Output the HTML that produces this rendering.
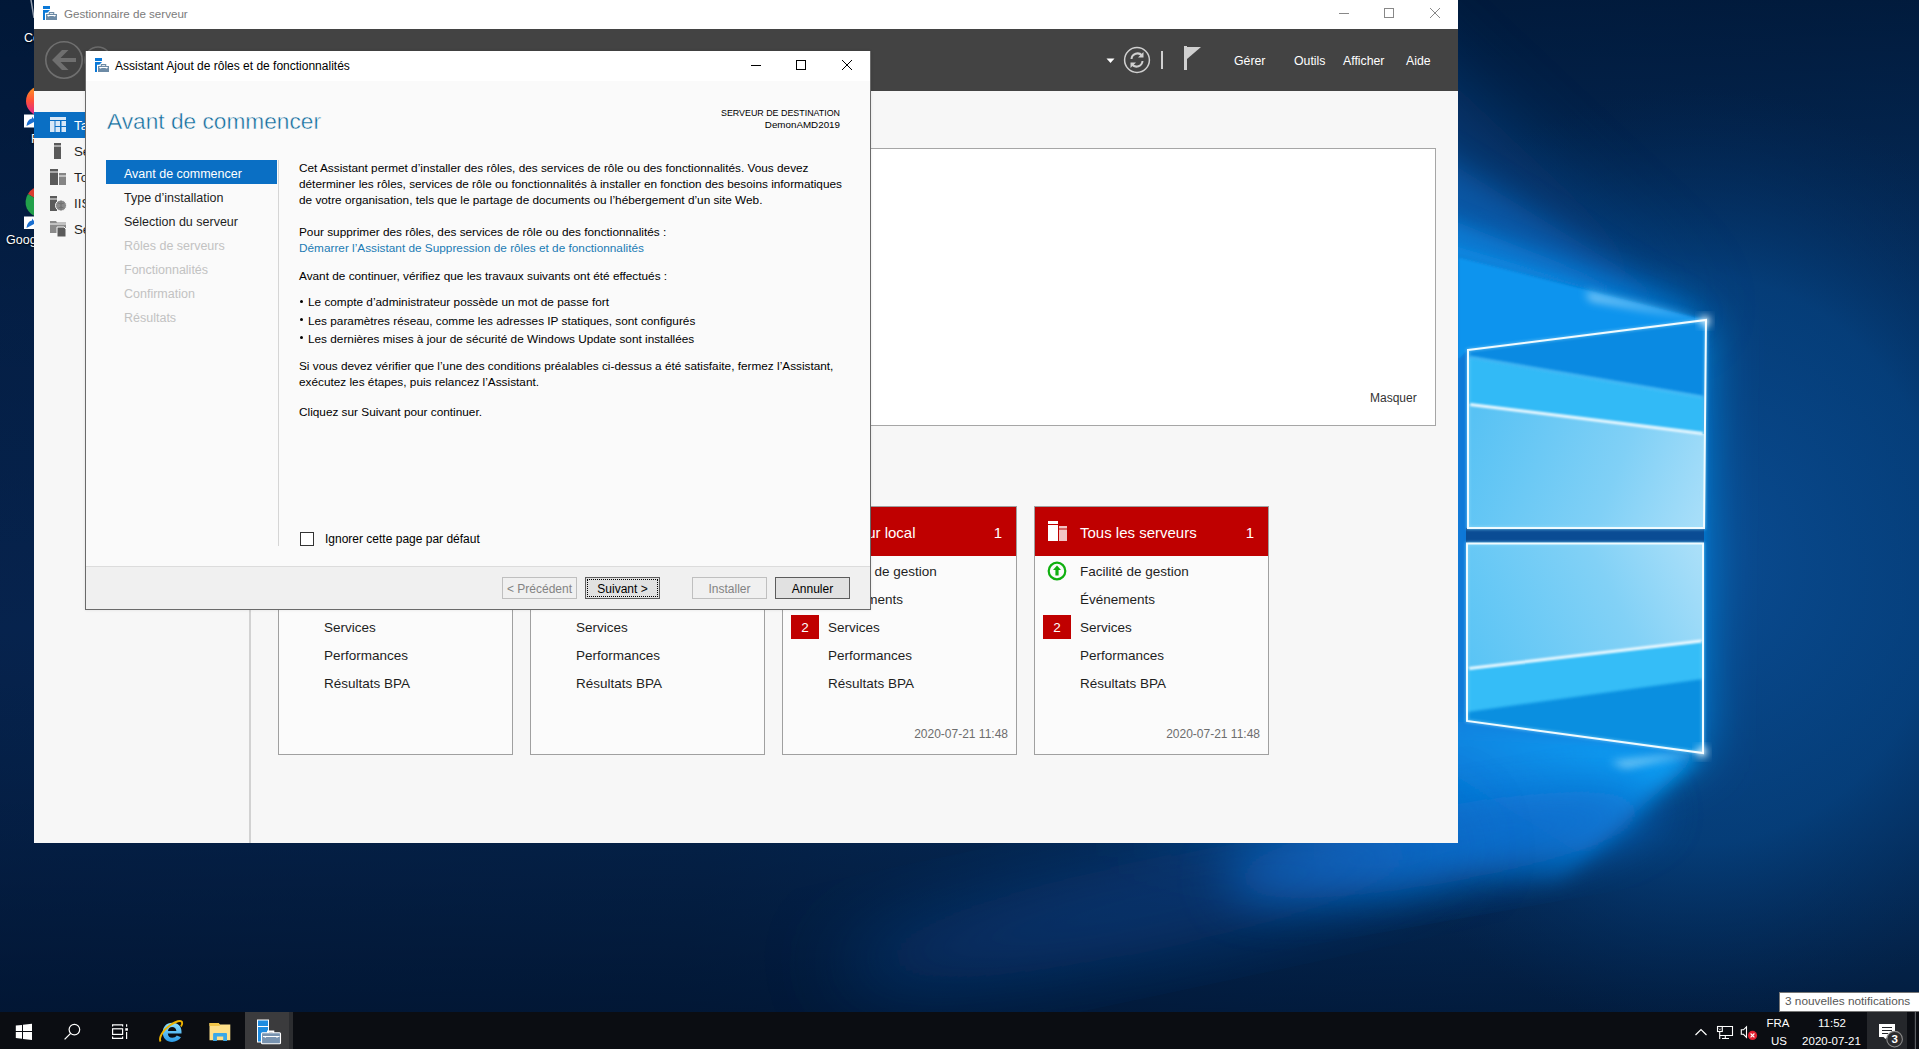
<!DOCTYPE html>
<html><head><meta charset="utf-8">
<style>
*{margin:0;padding:0;box-sizing:border-box}
html,body{width:1919px;height:1049px;overflow:hidden}
body{position:relative;font-family:"Liberation Sans",sans-serif;background:#00112b}
.t{position:absolute;white-space:nowrap;line-height:20px}
.r{position:absolute}
svg{position:absolute;overflow:visible}
</style></head><body>
<svg width="1919" height="1049" viewBox="0 0 1919 1049" style="left:0;top:0">
<defs>
<linearGradient id="bgb" x1="0" y1="100" x2="1919" y2="700" gradientUnits="userSpaceOnUse">
<stop offset="0" stop-color="#06224c"/>
<stop offset="0.45" stop-color="#062752"/>
<stop offset="0.72" stop-color="#06336a"/>
<stop offset="1" stop-color="#083a72"/>
</linearGradient>
<linearGradient id="topdark" x1="0" y1="0" x2="0" y2="1049" gradientUnits="userSpaceOnUse">
<stop offset="0" stop-color="#001634" stop-opacity="0.85"/>
<stop offset="0.3" stop-color="#001634" stop-opacity="0.3"/>
<stop offset="0.6" stop-color="#001634" stop-opacity="0"/>
<stop offset="0.8" stop-color="#00112a" stop-opacity="0.3"/>
<stop offset="1" stop-color="#00112a" stop-opacity="0.8"/>
</linearGradient>
<radialGradient id="rside" cx="1700" cy="560" r="430" gradientUnits="userSpaceOnUse" gradientTransform="translate(1700 560) scale(0.95 1.1) translate(-1700 -560)">
<stop offset="0" stop-color="#0a4c92" stop-opacity="1"/>
<stop offset="0.6" stop-color="#05417f" stop-opacity="0.8"/>
<stop offset="1" stop-color="#022a5a" stop-opacity="0"/>
</radialGradient>
<linearGradient id="floor" x1="1700" y1="0" x2="1100" y2="0" gradientUnits="userSpaceOnUse">
<stop offset="0" stop-color="#0a8ee8"/>
<stop offset="0.45" stop-color="#0a7ad6"/>
<stop offset="1" stop-color="#0a50a0" stop-opacity="0"/>
</linearGradient>
<linearGradient id="glowT" x1="1590" y1="291" x2="1570" y2="230" gradientUnits="userSpaceOnUse">
<stop offset="0" stop-color="#0a8ee8" stop-opacity="1"/>
<stop offset="0.5" stop-color="#0a70cc" stop-opacity="0.6"/>
<stop offset="1" stop-color="#0a4c90" stop-opacity="0"/>
</linearGradient>
<linearGradient id="glowB2" x1="1600" y1="740" x2="1500" y2="900" gradientUnits="userSpaceOnUse">
<stop offset="0" stop-color="#0a9cf2" stop-opacity="1"/>
<stop offset="0.5" stop-color="#0a84e0" stop-opacity="0.75"/>
<stop offset="1" stop-color="#0a6ac8" stop-opacity="0"/>
</linearGradient>
<linearGradient id="p1low" x1="1468" y1="430" x2="1705" y2="527" gradientUnits="userSpaceOnUse">
<stop offset="0" stop-color="#58c2f4"/>
<stop offset="0.6" stop-color="#80d0f6"/>
<stop offset="1" stop-color="#aadff9"/>
</linearGradient>
<linearGradient id="p2up" x1="1468" y1="660" x2="1705" y2="543" gradientUnits="userSpaceOnUse">
<stop offset="0" stop-color="#5ac4f5"/>
<stop offset="0.6" stop-color="#82d1f6"/>
<stop offset="1" stop-color="#ade0f9"/>
</linearGradient>
<filter id="b40" x="-50%" y="-50%" width="200%" height="200%"><feGaussianBlur stdDeviation="40"/></filter>
<filter id="b25" x="-50%" y="-50%" width="200%" height="200%"><feGaussianBlur stdDeviation="25"/></filter>
<filter id="b15" x="-50%" y="-50%" width="200%" height="200%"><feGaussianBlur stdDeviation="15"/></filter>
<filter id="b10" x="-50%" y="-50%" width="200%" height="200%"><feGaussianBlur stdDeviation="10"/></filter>
<filter id="b4" x="-50%" y="-50%" width="200%" height="200%"><feGaussianBlur stdDeviation="4"/></filter>
<filter id="b2" x="-50%" y="-50%" width="200%" height="200%"><feGaussianBlur stdDeviation="1.5"/></filter>
<filter id="b1" x="-50%" y="-50%" width="200%" height="200%"><feGaussianBlur stdDeviation="0.8"/></filter>
</defs>
<rect width="1919" height="1049" fill="url(#bgb)"/>
<rect width="1919" height="1049" fill="url(#topdark)"/>
<rect width="1919" height="1049" fill="url(#rside)"/>
<!-- floor / beams -->
<polygon points="1705,320 1458,258 1000,150 1000,850 1400,870 1702,753" fill="url(#floor)" filter="url(#b25)"/>
<polygon points="1705,322 1458,262 1458,740 1702,751" fill="#0a78d8" filter="url(#b4)"/>
<polygon points="1705,320 1300,218 1300,-60" fill="#0a5cb0" opacity="0.4" filter="url(#b40)"/>
<polygon points="1705,320 1300,218 1300,70" fill="#0a70cc" opacity="0.55" filter="url(#b15)"/>
<polygon points="1705,320 1300,218 1300,160" fill="#0a86e2" opacity="0.75" filter="url(#b10)"/>
<polygon points="1705,320 1300,218 1300,200" fill="#0a90ea" opacity="0.8" filter="url(#b4)"/>
<polygon points="1705,320 1458,257 1458,360 1468,350" fill="#0a94ee" filter="url(#b2)"/>
<polygon points="1706,320 1585,291 1590,301" fill="#d8f4ff" opacity="0.55" filter="url(#b4)"/>
<polygon points="1702,753 1467,721 1300,740 1300,900 1560,880" fill="url(#glowB2)" filter="url(#b10)"/>
<polygon points="1702,752 1610,762 1625,768" fill="#bfeeff" opacity="0.7" filter="url(#b4)"/>
<!-- bottom beam glow -->
<ellipse cx="1440" cy="845" rx="220" ry="38" transform="rotate(-10 1440 845)" fill="#0a70d0" filter="url(#b25)" opacity="0.95"/>
<ellipse cx="1150" cy="905" rx="320" ry="45" transform="rotate(-12 1150 905)" fill="#0a4a96" filter="url(#b40)" opacity="0.5"/>
<!-- gap between panes -->
<polygon points="1466,528 1704,528 1704,543 1466,543" fill="#0a4c94"/>
<!-- pane 1 -->
<polygon points="1468,350 1706,320 1704,528 1468,528" fill="#0a8ae2"/>
<polygon points="1468,357 1704,397 1704,528 1468,528" fill="#30baf6" filter="url(#b2)"/>
<polygon points="1468,404 1704,434 1704,528 1468,528" fill="url(#p1low)"/>
<line x1="1470" y1="357" x2="1703" y2="397" stroke="#6fd2ff" stroke-width="2" filter="url(#b2)" opacity="0.7"/>
<line x1="1470" y1="404.5" x2="1703" y2="433.5" stroke="#effaff" stroke-width="3" filter="url(#b1)"/>
<polygon points="1468,350 1706,320 1704,528 1468,528" fill="none" stroke="#9fe6ff" stroke-width="3" filter="url(#b2)" opacity="0.5"/>
<polygon points="1468,350 1706,320 1704,528 1468,528" fill="none" stroke="#f0fbff" stroke-width="2"/>
<!-- pane 2 -->
<polygon points="1467,543.5 1703,543.5 1703,753 1467,721" fill="#0a8fe0"/>
<polygon points="1467,543.5 1703,543.5 1703,679 1467,712" fill="#36bdf7" filter="url(#b2)"/>
<polygon points="1467,543.5 1703,543.5 1703,641 1467,668.5" fill="url(#p2up)"/>
<line x1="1469" y1="668.5" x2="1702" y2="641" stroke="#effaff" stroke-width="3" filter="url(#b1)"/>
<polygon points="1467,543.5 1703,543.5 1703,753 1467,721" fill="none" stroke="#9fe6ff" stroke-width="3" filter="url(#b2)" opacity="0.5"/>
<polygon points="1467,543.5 1703,543.5 1703,753 1467,721" fill="none" stroke="#f0fbff" stroke-width="2"/>
<!-- corner sparkles -->
<circle cx="1705" cy="321" r="5" fill="#fff" filter="url(#b4)"/>
<circle cx="1702" cy="752" r="5" fill="#fff" filter="url(#b4)"/>
</svg>

<svg width="34" height="260" style="left:0;top:0">
<defs>
<linearGradient id="ff" x1="0" y1="0" x2="0" y2="1"><stop offset="0" stop-color="#ff9a1f"/><stop offset="0.5" stop-color="#ff4f3a"/><stop offset="1" stop-color="#d9249a"/></linearGradient>
</defs>
<path d="M31 0 L34 18" stroke="#b8c0cc" stroke-width="1.5" opacity="0.8"/>
<circle cx="41" cy="101" r="15" fill="url(#ff)"/>
<rect x="24" y="114.5" width="10" height="13" fill="#fff"/>
<path d="M26.5 126 Q27 119.5 32 118.5 V116.5 L34 119 V122" fill="#1a6fd0"/>
<path d="M41 202 L28 194 A15 15 0 0 1 54 194 Z" fill="#db3b2f"/>
<path d="M41 202 L28 194 A15 15 0 0 0 38 217 Z" fill="#22a04a"/>
<rect x="24" y="216.5" width="10" height="12.5" fill="#fff"/>
<path d="M26.5 228 Q27 221.5 32 220.5 V218.5 L34 221 V224" fill="#1a6fd0"/>
</svg>

<div class="t" style="left:24px;top:27.67px;font-size:12.5px;color:#fff;text-shadow:0 1px 2px #000">Corbeille</div>
<div class="t" style="left:31px;top:128.67px;font-size:12.5px;color:#fff;text-shadow:0 1px 2px #000">Firefox</div>
<div class="t" style="left:6px;top:229.67px;font-size:12.5px;color:#fff;text-shadow:0 1px 2px #000">Google Chrome</div>
<div class="r" style="left:34px;top:0px;width:1424px;height:29px;background:#fff"></div>
<div class="r" style="left:34px;top:29px;width:1424px;height:62px;background:#434343"></div>
<div class="r" style="left:34px;top:91px;width:1424px;height:752px;background:#f7f7f7"></div>
<div class="t" style="left:64px;top:3.98px;font-size:11.6px;color:#7b7b7b;">Gestionnaire de serveur</div>
<div class="t" style="left:1234px;top:50.74px;font-size:12.3px;color:#fff;">Gérer</div>
<div class="t" style="left:1294px;top:50.74px;font-size:12.3px;color:#fff;">Outils</div>
<div class="t" style="left:1343px;top:50.74px;font-size:12.3px;color:#fff;">Afficher</div>
<div class="t" style="left:1406px;top:50.74px;font-size:12.3px;color:#fff;">Aide</div>
<div class="r" style="left:34px;top:112px;width:216px;height:26px;background:#0a6fc4"></div>
<div class="r" style="left:249px;top:91px;width:2px;height:752px;background:#d2d2d2"></div>
<svg width="16" height="16" viewBox="0 0 16 16" style="left:42px;top:5px">
<rect x="1" y="1" width="7" height="3" fill="#0a78d7"/>
<path d="M1 5 H8 L5.3 7.7 H3 V15 H1 Z" fill="#0a78d7"/>
<path d="M7.3 9.2 V7.6 H11.7 V9.2" stroke="#6d8ba6" stroke-width="1.1" fill="none"/>
<rect x="4" y="9" width="11" height="6" fill="#6d8ba6"/>
<path d="M5 10 H14 L13 11.6 H12 L11.5 10.9 H7.5 L7 11.6 H6 Z" fill="#fff"/>
</svg>
<svg width="1424" height="29" style="left:34px;top:0">
<line x1="1305" y1="13.5" x2="1315" y2="13.5" stroke="#888" stroke-width="1"/>
<rect x="1350.5" y="8.5" width="9" height="9" fill="none" stroke="#888" stroke-width="1"/>
<path d="M1396 8 L1406 18 M1406 8 L1396 18" stroke="#888" stroke-width="1"/>
</svg>
<svg width="1424" height="62" style="left:34px;top:29px">
<circle cx="30" cy="31" r="18.2" fill="none" stroke="#6f6f6f" stroke-width="1.6"/>
<path d="M18 31 L28 21 L34.5 21 L26.5 29 L42 29 L42 33 L26.5 33 L34.5 41 L28 41 Z" fill="#6f6f6f"/>
<circle cx="64" cy="31" r="13" fill="none" stroke="#6a6a6a" stroke-width="1.4"/>
<path d="M1072.5 29.5 H1080.5 L1076.5 34 Z" fill="#fff"/>
<circle cx="1103" cy="31" r="12.4" fill="none" stroke="#d0d0d0" stroke-width="1.5"/>
<path d="M1097.5 30 A6 6 0 0 1 1108 26.5" stroke="#d0d0d0" stroke-width="2" fill="none"/>
<path d="M1109.5 23 L1109.5 28.5 L1104 28.5 Z" fill="#d0d0d0"/>
<path d="M1108.5 32 A6 6 0 0 1 1098 35.5" stroke="#d0d0d0" stroke-width="2" fill="none"/>
<path d="M1096.5 39 L1096.5 33.5 L1102 33.5 Z" fill="#d0d0d0"/>
<rect x="1127" y="22" width="2" height="18" fill="#d0d0d0"/>
<rect x="1150" y="17" width="3" height="24" fill="#d0d0d0"/>
<path d="M1153 18 H1167 L1153 30 Z" fill="#d0d0d0"/>
</svg>
<svg width="216" height="140" style="left:34px;top:100px">
<!-- dashboard -->
<rect x="16" y="17" width="16" height="3" fill="#d8e8f7"/>
<rect x="16" y="21" width="4.5" height="11" fill="#d8e8f7"/>
<rect x="21.5" y="21" width="4.5" height="5" fill="#d8e8f7"/>
<rect x="27.5" y="21" width="4.5" height="5" fill="#d8e8f7"/>
<rect x="21.5" y="27" width="4.5" height="5" fill="#d8e8f7"/>
<rect x="27.5" y="27" width="4.5" height="5" fill="#d8e8f7"/>
<!-- local server -->
<rect x="20" y="43" width="7" height="2.5" fill="#5a5a5a"/>
<rect x="20" y="46.5" width="7" height="12.5" fill="#5a5a5a"/>
<!-- all servers -->
<rect x="16" y="69" width="8" height="2.5" fill="#5a5a5a"/>
<rect x="16" y="72.5" width="8" height="12.5" fill="#5a5a5a"/>
<rect x="25" y="73" width="7" height="2.5" fill="#858585"/>
<rect x="25" y="76.5" width="7" height="8.5" fill="#858585"/>
<!-- IIS -->
<rect x="16" y="96" width="7" height="2.5" fill="#5a5a5a"/>
<rect x="16" y="99.5" width="7" height="11.5" fill="#5a5a5a"/>
<circle cx="27" cy="105.5" r="5.5" fill="#8a8a8a" stroke="#f7f7f7" stroke-width="1"/>
<path d="M24 103 Q27 105 30 103 M24.5 108 Q27 106 29.5 108 M27 100.5 V110.5" stroke="#6a6a6a" stroke-width="0.8" fill="none"/>
<!-- file services -->
<path d="M16 121 H22 L23 122.5 H32 V133 H16 Z" fill="#8a8a8a"/>
<rect x="16" y="123.5" width="16" height="1" fill="#f7f7f7"/>
<path d="M23 127 H30 L32 129 V137 H23 Z" fill="#5a5a5a" stroke="#f7f7f7" stroke-width="1"/>
</svg>

<div class="t" style="left:74px;top:115.99px;font-size:13.3px;color:#fff;">Tableau de bord</div>
<div class="t" style="left:74px;top:141.99px;font-size:13.3px;color:#1e1e1e;">Serveur local</div>
<div class="t" style="left:74px;top:167.99px;font-size:13.3px;color:#1e1e1e;">Tous les serveurs</div>
<div class="t" style="left:74px;top:193.99px;font-size:13.3px;color:#1e1e1e;">IIS</div>
<div class="t" style="left:74px;top:219.99px;font-size:13.3px;color:#1e1e1e;">Services de fichiers et de stockage</div>
<div class="r" style="left:278px;top:148px;width:1158px;height:278px;background:#fff;border:1px solid #a6a6a6"></div>
<div class="t" style="left:1370px;top:387.84px;font-size:12px;color:#333;">Masquer</div>
<div class="r" style="left:278px;top:506px;width:235px;height:249px;background:#fbfbfb;border:1px solid #a0a0a0"></div>
<div class="r" style="left:279px;top:507px;width:233px;height:49px;background:#bf0000"></div>
<div class="t" style="left:324px;top:522.8px;font-size:15px;color:#fff;">Serveur local</div>
<div class="t" style="right:1421px;top:522.8px;font-size:15px;color:#fff;">1</div>
<div class="t" style="left:324px;top:562.32px;font-size:13.5px;color:#1e1e1e;">Facilité de gestion</div>
<div class="t" style="left:324px;top:590.32px;font-size:13.5px;color:#1e1e1e;">Événements</div>
<div class="t" style="left:324px;top:618.32px;font-size:13.5px;color:#1e1e1e;">Services</div>
<div class="t" style="left:324px;top:646.32px;font-size:13.5px;color:#1e1e1e;">Performances</div>
<div class="t" style="left:324px;top:674.32px;font-size:13.5px;color:#1e1e1e;">Résultats BPA</div>
<div class="r" style="left:530px;top:506px;width:235px;height:249px;background:#fbfbfb;border:1px solid #a0a0a0"></div>
<div class="r" style="left:531px;top:507px;width:233px;height:49px;background:#bf0000"></div>
<div class="t" style="left:576px;top:522.8px;font-size:15px;color:#fff;">IIS</div>
<div class="t" style="right:1169px;top:522.8px;font-size:15px;color:#fff;">1</div>
<div class="t" style="left:576px;top:562.32px;font-size:13.5px;color:#1e1e1e;">Facilité de gestion</div>
<div class="t" style="left:576px;top:590.32px;font-size:13.5px;color:#1e1e1e;">Événements</div>
<div class="t" style="left:576px;top:618.32px;font-size:13.5px;color:#1e1e1e;">Services</div>
<div class="t" style="left:576px;top:646.32px;font-size:13.5px;color:#1e1e1e;">Performances</div>
<div class="t" style="left:576px;top:674.32px;font-size:13.5px;color:#1e1e1e;">Résultats BPA</div>
<div class="r" style="left:782px;top:506px;width:235px;height:249px;background:#fbfbfb;border:1px solid #a0a0a0"></div>
<div class="r" style="left:783px;top:507px;width:233px;height:49px;background:#bf0000"></div>
<div class="t" style="left:828px;top:522.8px;font-size:15px;color:#fff;">Serveur local</div>
<div class="t" style="right:917px;top:522.8px;font-size:15px;color:#fff;">1</div>
<div class="t" style="left:828px;top:562.32px;font-size:13.5px;color:#1e1e1e;">Facilité de gestion</div>
<div class="t" style="left:828px;top:590.32px;font-size:13.5px;color:#1e1e1e;">Événements</div>
<div class="t" style="left:828px;top:618.32px;font-size:13.5px;color:#1e1e1e;">Services</div>
<div class="t" style="left:828px;top:646.32px;font-size:13.5px;color:#1e1e1e;">Performances</div>
<div class="t" style="left:828px;top:674.32px;font-size:13.5px;color:#1e1e1e;">Résultats BPA</div>
<div class="r" style="left:791px;top:615px;width:28px;height:24px;background:#c00000"></div>
<div class="t" style="left:805px;transform:translateX(-50%);top:618.32px;font-size:13.5px;color:#fff;">2</div>
<div class="t" style="right:911px;top:723.84px;font-size:12px;color:#6d6d6d;">2020-07-21 11:48</div>
<div class="r" style="left:1034px;top:506px;width:235px;height:249px;background:#fbfbfb;border:1px solid #a0a0a0"></div>
<div class="r" style="left:1035px;top:507px;width:233px;height:49px;background:#bf0000"></div>
<div class="t" style="left:1080px;top:522.8px;font-size:15px;color:#fff;">Tous les serveurs</div>
<div class="t" style="right:665px;top:522.8px;font-size:15px;color:#fff;">1</div>
<div class="t" style="left:1080px;top:562.32px;font-size:13.5px;color:#1e1e1e;">Facilité de gestion</div>
<div class="t" style="left:1080px;top:590.32px;font-size:13.5px;color:#1e1e1e;">Événements</div>
<div class="t" style="left:1080px;top:618.32px;font-size:13.5px;color:#1e1e1e;">Services</div>
<div class="t" style="left:1080px;top:646.32px;font-size:13.5px;color:#1e1e1e;">Performances</div>
<div class="t" style="left:1080px;top:674.32px;font-size:13.5px;color:#1e1e1e;">Résultats BPA</div>
<div class="r" style="left:1043px;top:615px;width:28px;height:24px;background:#c00000"></div>
<div class="t" style="left:1057px;transform:translateX(-50%);top:618.32px;font-size:13.5px;color:#fff;">2</div>
<div class="t" style="right:659px;top:723.84px;font-size:12px;color:#6d6d6d;">2020-07-21 11:48</div>
<svg width="24" height="24" style="left:1046px;top:519px">
<rect x="2" y="2" width="10" height="3" fill="#fff"/>
<rect x="2" y="6" width="10" height="16" fill="#fff"/>
<rect x="13" y="7" width="8" height="2.5" fill="#f2c4c4"/>
<rect x="13" y="10.5" width="8" height="11.5" fill="#f2c4c4"/>
</svg>
<svg width="24" height="24" style="left:1044.5px;top:558.5px">
<circle cx="12" cy="12" r="8.3" fill="none" stroke="#10b010" stroke-width="2.2"/>
<path d="M12 6.5 L16 11 H13.6 V16.5 H10.4 V11 H8 Z" fill="#10b010"/>
</svg>

<div class="r" style="left:85px;top:51px;width:786px;height:559px;box-shadow:0 0 3px rgba(0,0,0,0.10)"></div>
<div class="r" style="left:85px;top:51px;width:786px;height:559px;background:#fafafa;border:1px solid #6a6a6a;border-top:none"></div>
<div class="r" style="left:86px;top:51px;width:784px;height:30px;background:#fff"></div>
<svg width="16" height="16" viewBox="0 0 16 16" style="left:94px;top:57px">
<rect x="1" y="1" width="7" height="3" fill="#0a78d7"/>
<path d="M1 5 H8 L5.3 7.7 H3 V15 H1 Z" fill="#0a78d7"/>
<path d="M7.3 9.2 V7.6 H11.7 V9.2" stroke="#6d8ba6" stroke-width="1.1" fill="none"/>
<rect x="4" y="9" width="11" height="6" fill="#6d8ba6"/>
<path d="M5 10 H14 L13 11.6 H12 L11.5 10.9 H7.5 L7 11.6 H6 Z" fill="#fff"/>
</svg>
<svg width="120" height="30" style="left:745px;top:51px">
<line x1="6" y1="14.5" x2="16" y2="14.5" stroke="#000" stroke-width="1"/>
<rect x="51.5" y="9.5" width="9" height="9" fill="none" stroke="#000" stroke-width="1"/>
<path d="M97 9 L107 19 M107 9 L97 19" stroke="#000" stroke-width="1"/>
</svg>

<div class="t" style="left:115px;top:55.84px;font-size:12px;color:#000;">Assistant Ajout de rôles et de fonctionnalités</div>
<div class="t" style="left:107px;top:111.13px;font-size:22.7px;color:#0e6a9c;-webkit-text-stroke:0.45px #fafafa">Avant de commencer</div>
<div class="t" style="right:1079px;top:102.91px;font-size:8.9px;color:#000;">SERVEUR DE DESTINATION</div>
<div class="t" style="right:1079px;top:115.2px;font-size:9.8px;color:#000;">DemonAMD2019</div>
<div class="r" style="left:106px;top:160px;width:171px;height:24px;background:#0a6fc4"></div>
<div class="r" style="left:278px;top:160px;width:1px;height:386px;background:#d5d5d5"></div>
<div class="t" style="left:124px;top:163.67px;font-size:12.5px;color:#fff;">Avant de commencer</div>
<div class="t" style="left:124px;top:187.67px;font-size:12.5px;color:#1e1e1e;">Type d’installation</div>
<div class="t" style="left:124px;top:211.67px;font-size:12.5px;color:#1e1e1e;">Sélection du serveur</div>
<div class="t" style="left:124px;top:235.67px;font-size:12.5px;color:#c2c2c2;">Rôles de serveurs</div>
<div class="t" style="left:124px;top:259.67px;font-size:12.5px;color:#c2c2c2;">Fonctionnalités</div>
<div class="t" style="left:124px;top:283.67px;font-size:12.5px;color:#c2c2c2;">Confirmation</div>
<div class="t" style="left:124px;top:307.67px;font-size:12.5px;color:#c2c2c2;">Résultats</div>
<div class="t" style="left:299px;top:157.91px;font-size:11.8px;color:#000;">Cet Assistant permet d’installer des rôles, des services de rôle ou des fonctionnalités. Vous devez</div>
<div class="t" style="left:299px;top:173.91px;font-size:11.8px;color:#000;">déterminer les rôles, services de rôle ou fonctionnalités à installer en fonction des besoins informatiques</div>
<div class="t" style="left:299px;top:189.91px;font-size:11.8px;color:#000;">de votre organisation, tels que le partage de documents ou l’hébergement d’un site Web.</div>
<div class="t" style="left:299px;top:221.91px;font-size:11.8px;color:#000;">Pour supprimer des rôles, des services de rôle ou des fonctionnalités :</div>
<div class="t" style="left:299px;top:265.91px;font-size:11.8px;color:#000;">Avant de continuer, vérifiez que les travaux suivants ont été effectués :</div>
<div class="t" style="left:299px;top:355.91px;font-size:11.8px;color:#000;">Si vous devez vérifier que l’une des conditions préalables ci-dessus a été satisfaite, fermez l’Assistant,</div>
<div class="t" style="left:299px;top:371.91px;font-size:11.8px;color:#000;">exécutez les étapes, puis relancez l’Assistant.</div>
<div class="t" style="left:299px;top:401.51px;font-size:11.8px;color:#000;">Cliquez sur Suivant pour continuer.</div>
<div class="t" style="left:299px;top:237.91px;font-size:11.8px;color:#1b7ab4;">Démarrer l’Assistant de Suppression de rôles et de fonctionnalités</div>
<div class="r" style="left:300px;top:299.5px;width:3px;height:3px;background:#000;border-radius:50%"></div>
<div class="t" style="left:308px;top:292.41px;font-size:11.8px;color:#000;">Le compte d’administrateur possède un mot de passe fort</div>
<div class="r" style="left:300px;top:318px;width:3px;height:3px;background:#000;border-radius:50%"></div>
<div class="t" style="left:308px;top:310.91px;font-size:11.8px;color:#000;">Les paramètres réseau, comme les adresses IP statiques, sont configurés</div>
<div class="r" style="left:300px;top:336px;width:3px;height:3px;background:#000;border-radius:50%"></div>
<div class="t" style="left:308px;top:328.91px;font-size:11.8px;color:#000;">Les dernières mises à jour de sécurité de Windows Update sont installées</div>
<div class="r" style="left:300px;top:532px;width:14px;height:14px;background:#fff;border:1px solid #333"></div>
<div class="t" style="left:325px;top:528.84px;font-size:12px;color:#000;">Ignorer cette page par défaut</div>
<div class="r" style="left:86px;top:566px;width:784px;height:43px;background:#f0f0f0;border-top:1px solid #dcdcdc"></div>
<div class="r" style="left:502px;top:577px;width:75px;height:22px;background:#f0f0f0;border:1px solid #bfbfbf"></div>
<div class="t" style="left:539.5px;transform:translateX(-50%);top:578.84px;font-size:12px;color:#838383;">&lt; Précédent</div>
<div class="r" style="left:585px;top:577px;width:75px;height:22px;background:#e1e1e1;border:1px solid #5c5c5c"></div>
<div class="r" style="left:587px;top:579px;width:71px;height:18px;border:1px dotted #000"></div>
<div class="t" style="left:622.5px;transform:translateX(-50%);top:578.84px;font-size:12px;color:#000;">Suivant &gt;</div>
<div class="r" style="left:692px;top:577px;width:75px;height:22px;background:#f0f0f0;border:1px solid #bfbfbf"></div>
<div class="t" style="left:729.5px;transform:translateX(-50%);top:578.84px;font-size:12px;color:#838383;">Installer</div>
<div class="r" style="left:775px;top:577px;width:75px;height:22px;background:#e1e1e1;border:1px solid #5c5c5c"></div>
<div class="t" style="left:812.5px;transform:translateX(-50%);top:578.84px;font-size:12px;color:#000;">Annuler</div>
<div class="r" style="left:0px;top:1012px;width:1919px;height:37px;background:#0b0d12"></div>
<div class="r" style="left:245px;top:1012px;width:44px;height:37px;background:#3b3b3d"></div>
<div class="r" style="left:289px;top:1012px;width:4px;height:37px;background:#2c2d30"></div>
<div class="r" style="left:1867px;top:1012px;width:40px;height:37px;background:#25272b"></div>
<svg width="300" height="38" style="left:0;top:1011px">
<!-- start -->
<path d="M15.8 14.5 L22 13.9 V20 H15.8 Z M23 13.8 L32 12.8 V20 H23 Z M15.8 21 H22 V27.8 L15.8 27 Z M23 21 H32 V29 L23 27.9 Z" fill="#fff"/>
<!-- search -->
<circle cx="74.4" cy="18.6" r="5.3" fill="none" stroke="#fff" stroke-width="1.2"/>
<path d="M70.6 22.4 L64.6 28.4" stroke="#fff" stroke-width="1.3"/>
<!-- task view -->
<path d="M112.6 15.6 V13.8 H122.6 V15.6 M112.6 25.6 V27.4 H122.6 V25.6" stroke="#fff" stroke-width="1.2" fill="none"/>
<rect x="112.6" y="17.8" width="10" height="5.6" fill="none" stroke="#fff" stroke-width="1.2"/>
<path d="M126.6 13.2 V15.8 M126.6 21 V28" stroke="#fff" stroke-width="1.2"/>
<rect x="125.3" y="17.2" width="2.6" height="2.5" fill="#fff"/>
<!-- IE -->
<defs><linearGradient id="ieb" x1="0" y1="0" x2="0" y2="1"><stop offset="0" stop-color="#8ee0ff"/><stop offset="1" stop-color="#2b9be6"/></linearGradient></defs>
<path fill-rule="evenodd" d="M181.5 22.4 V20.5 C181.5 15 177.5 11.8 172 11.8 C166.5 11.8 162.7 16 162.7 21.5 C162.7 27 166.5 31 172 31 C176 31 179 29 181 26.3 L176.8 24.6 C175.8 26 174.2 26.8 172.2 26.8 C169.6 26.8 168 25 167.8 22.4 Z M168 20 H176.4 C176.1 17.6 174.5 16 172.2 16 C169.9 16 168.3 17.6 168 20 Z" fill="url(#ieb)"/>
<path d="M160.5 30.5 C158.5 26.5 163 19 170 14.2 C176 10.2 181 8.8 182 11 C182.6 12.4 182 14 181 15.5" stroke="#f0b400" stroke-width="1.9" fill="none"/>
<!-- explorer -->
<path d="M209.5 12 H218.5 L219.8 13.5 H230.3 V29.2 H209.5 Z" fill="#ffe08a"/>
<path d="M209.5 12 H218.5 L219.8 13.5 V15 H209.5 Z" fill="#f3c648"/>
<path d="M213.1 29.9 V23.1 Q213.1 22.1 214.1 22.1 H226 Q227 22.1 227 23.1 V29.9 H223.2 V25.4 H216.9 V29.9 Z" fill="#3aa8e8"/>
<!-- server manager (active) -->
<rect x="257.5" y="9" width="11" height="22" fill="#1e8ce0" stroke="#fff" stroke-width="1"/>
<path d="M258 15.5 H268" stroke="#fff" stroke-width="1"/>
<path d="M267.8 22 V20.3 H273.5 V22" stroke="#fff" stroke-width="1.6" fill="none"/>
<rect x="261.5" y="21.8" width="19" height="11" rx="1" fill="#7893b0" stroke="#fff" stroke-width="1.1"/>
<path d="M263 25.5 H279.5" stroke="#fff" stroke-width="1"/>
<circle cx="265.3" cy="25.8" r="0.9" fill="#fff"/><circle cx="277" cy="25.8" r="0.9" fill="#fff"/>
</svg>
<svg width="240" height="38" style="left:1680px;top:1011px">
<path d="M15.5 24 L21 18.5 L26.5 24" stroke="#fff" stroke-width="1.2" fill="none"/>
<!-- network -->
<path d="M38 15.5 H52.5 V24.5 H40" fill="none" stroke="#fff" stroke-width="1.1"/>
<rect x="37.5" y="15.5" width="4.8" height="5" fill="#0b0d12" stroke="#fff" stroke-width="1.1"/>
<path d="M38.8 17.5 L39.9 18.8 L41 17.5" stroke="#fff" stroke-width="0.7" fill="none"/>
<path d="M39.7 20.5 V28" stroke="#fff" stroke-width="1.1"/>
<path d="M45.3 24.5 V27.5 M42 27.5 H49" stroke="#fff" stroke-width="1.1"/>
<!-- speaker -->
<path d="M61.3 18.8 H63.5 L66.5 15.8 V26.3 L63.5 23.3 H61.3 Z" fill="none" stroke="#fff" stroke-width="1.1"/>
<circle cx="72.5" cy="24.4" r="4.6" fill="#e02030"/>
<path d="M70.6 22.5 L74.4 26.3 M74.4 22.5 L70.6 26.3" stroke="#fff" stroke-width="1.1"/>
<!-- notifications -->
<path d="M199 13 H215 V26 H207.5 L205.5 28 L203.5 26 H199 Z" fill="#fff"/>
<path d="M202 16.5 H212 M202 19.5 H212 M202 22.5 H208" stroke="#25272b" stroke-width="1"/>
<circle cx="214.6" cy="28.2" r="7.8" fill="#2b2b2d" stroke="#8a8a8a" stroke-width="1.1"/>
<rect x="234.8" y="0" width="1.2" height="38" fill="#5a5d62"/>
</svg>

<div class="t" style="left:1778px;transform:translateX(-50%);top:1013.31px;font-size:11.5px;color:#fff;">FRA</div>
<div class="t" style="left:1779px;transform:translateX(-50%);top:1030.51px;font-size:11.5px;color:#fff;">US</div>
<div class="t" style="left:1832px;transform:translateX(-50%);top:1012.71px;font-size:11.5px;color:#fff;">11:52</div>
<div class="t" style="left:1831.5px;transform:translateX(-50%);top:1030.51px;font-size:11.5px;color:#fff;">2020-07-21</div>
<div class="t" style="left:1894.8px;transform:translateX(-50%);top:1029.01px;font-size:11.5px;color:#fff;font-weight:bold">3</div>
<div class="r" style="left:1779px;top:992px;width:140px;height:20px;background:#fff;border:1px solid #767676;border-right:none"></div>
<div class="t" style="left:1785px;top:991.11px;font-size:11.8px;color:#575757;">3 nouvelles notifications</div>
</body></html>
